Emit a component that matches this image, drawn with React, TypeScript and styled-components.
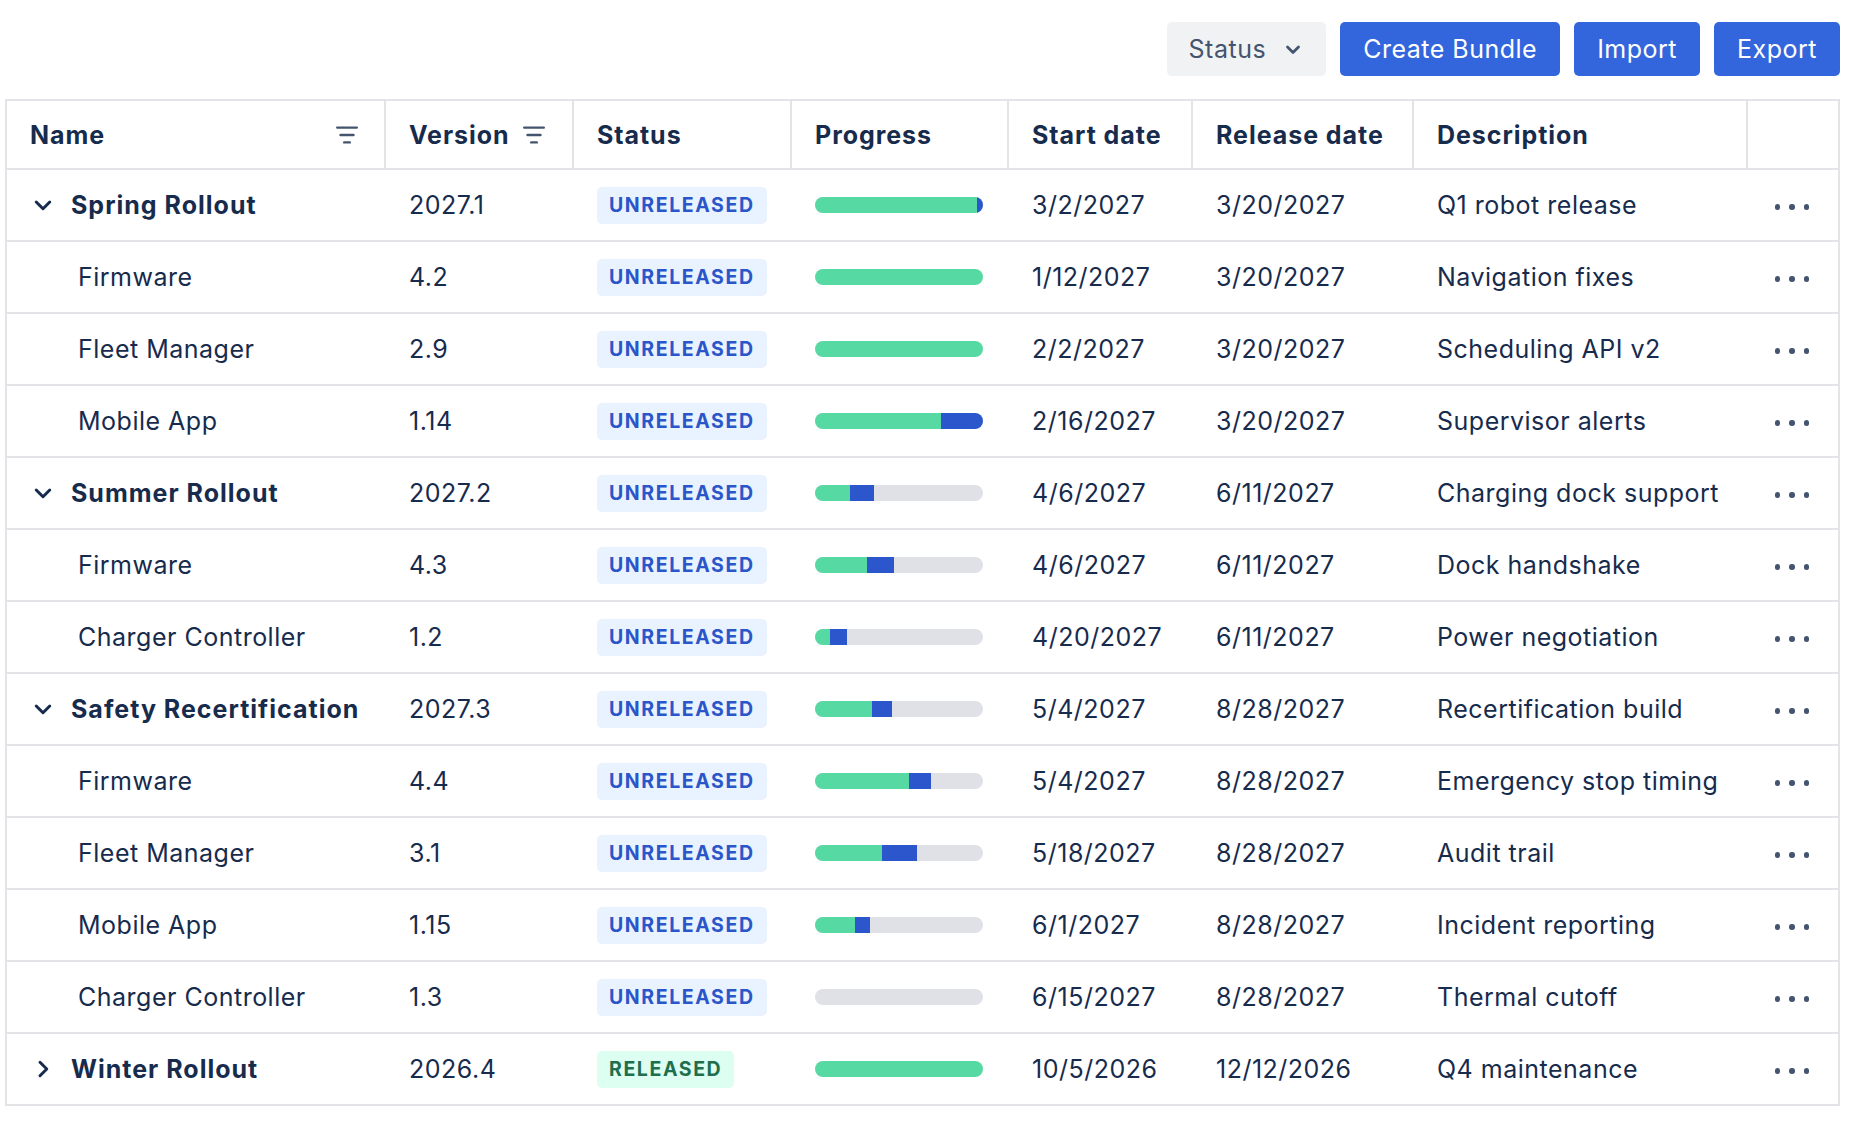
import React from "react";
import styled, { createGlobalStyle } from "styled-components";

const GlobalStyle = createGlobalStyle`
    body {
        margin: 0;
        background: #ffffff;
        font-family: Inter, "Noto Sans", "Liberation Sans", sans-serif;
        color: #172b4d;
    }
`;

const Page = styled.div`
    padding: 22px 18px 0 5px;
`;

const Toolbar = styled.div`
    display: flex;
    justify-content: flex-end;
    gap: 14px;
    margin-bottom: 23px;
`;

const Button = styled.button<{ $primary?: boolean }>`
    height: 54px;
    display: inline-flex;
    align-items: center;
    gap: 16px;
    padding: 0 ${p => (p.$primary ? "23px" : "22px")};
    border: none;
    border-radius: 5px;
    font-family: inherit;
    font-size: 25px;
    font-weight: 400;
    letter-spacing: 0.5px;
    background: ${p => (p.$primary ? "#3366dd" : "#f1f2f4")};
    color: ${p => (p.$primary ? "#ffffff" : "#44546f")};
    cursor: pointer;
`;

const Table = styled.table`
    width: 1835px;
    table-layout: fixed;
    border-collapse: separate;
    border-spacing: 0;
    border: 2px solid #e2e4e7;
    font-size: 25px;
    letter-spacing: 0.5px;
`;

const HeadCell = styled.th`
    box-sizing: border-box;
    height: 69px;
    padding: 0 26px 0 23px;
    text-align: left;
    white-space: nowrap;
    font-weight: 700;
    letter-spacing: 0.95px;
    color: #172b4d;
    border-bottom: 2px solid #e2e4e7;
    border-right: 2px solid #e2e4e7;

    &:last-child {
        border-right: none;
    }
`;

const HeadInner = styled.div<{ $spread?: boolean }>`
    display: flex;
    align-items: center;
    justify-content: ${p => (p.$spread ? "space-between" : "flex-start")};
    gap: 13px;
`;

const Row = styled.tr`
    &:last-child td {
        border-bottom: none;
        height: 70px;
    }
`;

const Cell = styled.td<{ $center?: boolean }>`
    box-sizing: border-box;
    height: 72px;
    padding: 0 25px 0 23px;
    border-bottom: 2px solid #e2e4e7;
    white-space: nowrap;
    text-align: ${p => (p.$center ? "center" : "left")};
    color: #172b4d;
`;

const NameWrap = styled.div<{ $child?: boolean }>`
    display: flex;
    align-items: center;
    gap: 16px;
    padding-left: ${p => (p.$child ? "48px" : "1px")};
    font-weight: ${p => (p.$child ? 400 : 700)};
    letter-spacing: ${p => (p.$child ? "0.5px" : "1px")};
`;

const Toggle = styled.span`
    display: inline-flex;
    width: 24px;
    height: 24px;
    color: #172b4d;
`;

const Lozenge = styled.span<{ $released?: boolean }>`
    display: inline-flex;
    align-items: center;
    height: 37px;
    padding: 0 12px;
    border-radius: 5px;
    font-size: 19.5px;
    font-weight: 700;
    letter-spacing: 1.6px;
    background: ${p => (p.$released ? "#dcfff1" : "#e9f2ff")};
    color: ${p => (p.$released ? "#216e4e" : "#2a56c9")};
`;

const Track = styled.div`
    display: flex;
    width: 168px;
    height: 16px;
    border-radius: 8px;
    overflow: hidden;
    background: #dfe1e6;
`;

const Done = styled.div`
    height: 100%;
    background: #57d9a3;
`;

const InProgress = styled.div`
    height: 100%;
    background: #2c56cc;
`;

const Dots = styled.span`
    display: inline-flex;
    gap: 9px;
    vertical-align: middle;

    & i {
        width: 5.5px;
        height: 5.5px;
        border-radius: 50%;
        background: #44546f;
    }
`;

type Item = {
    name: string;
    version: string;
    released?: boolean;
    done: number;
    doing: number;
    start: string;
    release: string;
    desc: string;
    children?: Item[];
    open?: boolean;
};

const bundles: Item[] = [
    {
        name: "Spring Rollout", version: "2027.1", done: 96.5, doing: 3.5,
        start: "3/2/2027", release: "3/20/2027", desc: "Q1 robot release", open: true,
        children: [
            { name: "Firmware", version: "4.2", done: 100, doing: 0, start: "1/12/2027", release: "3/20/2027", desc: "Navigation fixes" },
            { name: "Fleet Manager", version: "2.9", done: 100, doing: 0, start: "2/2/2027", release: "3/20/2027", desc: "Scheduling API v2" },
            { name: "Mobile App", version: "1.14", done: 75, doing: 25, start: "2/16/2027", release: "3/20/2027", desc: "Supervisor alerts" },
        ],
    },
    {
        name: "Summer Rollout", version: "2027.2", done: 21, doing: 14,
        start: "4/6/2027", release: "6/11/2027", desc: "Charging dock support", open: true,
        children: [
            { name: "Firmware", version: "4.3", done: 31, doing: 16, start: "4/6/2027", release: "6/11/2027", desc: "Dock handshake" },
            { name: "Charger Controller", version: "1.2", done: 9, doing: 10, start: "4/20/2027", release: "6/11/2027", desc: "Power negotiation" },
        ],
    },
    {
        name: "Safety Recertification", version: "2027.3", done: 34, doing: 12,
        start: "5/4/2027", release: "8/28/2027", desc: "Recertification build", open: true,
        children: [
            { name: "Firmware", version: "4.4", done: 56, doing: 13, start: "5/4/2027", release: "8/28/2027", desc: "Emergency stop timing" },
            { name: "Fleet Manager", version: "3.1", done: 40, doing: 21, start: "5/18/2027", release: "8/28/2027", desc: "Audit trail" },
            { name: "Mobile App", version: "1.15", done: 24, doing: 9, start: "6/1/2027", release: "8/28/2027", desc: "Incident reporting" },
            { name: "Charger Controller", version: "1.3", done: 0, doing: 0, start: "6/15/2027", release: "8/28/2027", desc: "Thermal cutoff" },
        ],
    },
    {
        name: "Winter Rollout", version: "2026.4", released: true, done: 100, doing: 0,
        start: "10/5/2026", release: "12/12/2026", desc: "Q4 maintenance", open: false,
    },
];

const FilterIcon = () => (
    <svg width="22" height="18" viewBox="0 0 22 18" fill="none" stroke="#44546f" strokeWidth="2.4" strokeLinecap="round">
        <line x1="1.2" y1="1.6" x2="20.8" y2="1.6"/>
        <line x1="4.5" y1="9" x2="17.5" y2="9"/>
        <line x1="8.2" y1="16.4" x2="13.8" y2="16.4"/>
    </svg>
);

const Chevron = ({ open }: { open: boolean }) => (
    <svg width="24" height="24" viewBox="0 0 16 16" fill="none" stroke="currentColor" strokeWidth="2" strokeLinecap="round" strokeLinejoin="round">
        {open ? <path d="M3.5 6 L8 10.5 L12.5 6"/> : <path d="M6 3.5 L10.5 8 L6 12.5"/>}
    </svg>
);

const SmallChevron = () => (
    <svg width="22" height="22" viewBox="0 0 16 16" fill="none" stroke="#44546f" strokeWidth="2" strokeLinecap="round" strokeLinejoin="round">
        <path d="M4 6.5 L8 10.5 L12 6.5"/>
    </svg>
);

function BundleRow({ item, child }: { item: Item; child?: boolean }) {
    return (
        <Row>
            <Cell>
                <NameWrap $child={child}>
                    {!child && <Toggle><Chevron open={!!item.open}/></Toggle>}
                    {item.name}
                </NameWrap>
            </Cell>
            <Cell>{item.version}</Cell>
            <Cell>
                <Lozenge $released={item.released}>{item.released ? "RELEASED" : "UNRELEASED"}</Lozenge>
            </Cell>
            <Cell>
                <Track>
                    <Done style={{ width: `${item.done}%` }}/>
                    <InProgress style={{ width: `${item.doing}%` }}/>
                </Track>
            </Cell>
            <Cell>{item.start}</Cell>
            <Cell>{item.release}</Cell>
            <Cell>{item.desc}</Cell>
            <Cell $center>
                <Dots><i/><i/><i/></Dots>
            </Cell>
        </Row>
    );
}

export default function App() {
    return (
        <Page>
            <GlobalStyle/>
            <Toolbar>
                <Button>Status <SmallChevron/></Button>
                <Button $primary>Create Bundle</Button>
                <Button $primary>Import</Button>
                <Button $primary>Export</Button>
            </Toolbar>
            <Table>
                <colgroup>
                    <col style={{ width: 379 }}/>
                    <col style={{ width: 188 }}/>
                    <col style={{ width: 218 }}/>
                    <col style={{ width: 217 }}/>
                    <col style={{ width: 184 }}/>
                    <col style={{ width: 221 }}/>
                    <col style={{ width: 334 }}/>
                    <col style={{ width: 90 }}/>
                </colgroup>
                <thead>
                    <tr>
                        <HeadCell><HeadInner $spread>Name <FilterIcon/></HeadInner></HeadCell>
                        <HeadCell><HeadInner>Version <FilterIcon/></HeadInner></HeadCell>
                        <HeadCell>Status</HeadCell>
                        <HeadCell>Progress</HeadCell>
                        <HeadCell>Start date</HeadCell>
                        <HeadCell>Release date</HeadCell>
                        <HeadCell>Description</HeadCell>
                        <HeadCell/>
                    </tr>
                </thead>
                <tbody>
                    {bundles.map(b => (
                        <React.Fragment key={b.name}>
                            <BundleRow item={b}/>
                            {b.open && b.children?.map(c => <BundleRow key={b.name + c.name} item={c} child/>)}
                        </React.Fragment>
                    ))}
                </tbody>
            </Table>
        </Page>
    );
}
